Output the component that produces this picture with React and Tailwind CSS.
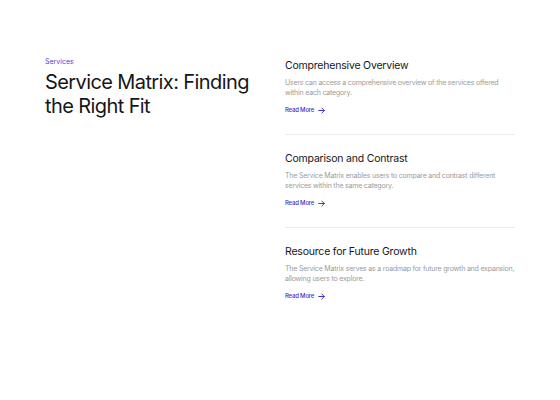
import React from "react";

const items = [
  {
    title: "Comprehensive Overview",
    desc: "Users can access a comprehensive overview of the services offered within each category.",
  },
  {
    title: "Comparison and Contrast",
    desc: "The Service Matrix enables users to compare and contrast different services within the same category.",
  },
  {
    title: "Resource for Future Growth",
    desc: "The Service Matrix serves as a roadmap for future growth and expansion, allowing users to explore.",
  },
];

function Arrow() {
  return (
    <svg width="7" height="7" viewBox="0 0 10 10" fill="none" stroke="currentColor" strokeWidth="1.4" strokeLinecap="round" strokeLinejoin="round">
      <path d="M1 5h8M5.5 1.5 9 5 5.5 8.5" />
    </svg>
  );
}

export default function App() {
  return (
    <div className="w-[560px] h-[400px] bg-white pl-[45px] pt-[57px] flex font-['Inter',sans-serif] text-[#1b1b1f]">
      <div className="w-[240px] pr-[25px] flex flex-col">
        <div className="text-[7px] leading-[10px] text-[#4a44d6]">Services</div>
        <h1 className="mt-[3px] text-[20px] leading-[24px] font-normal tracking-[-0.6px] text-[#161618]">
          Service Matrix: Finding the Right Fit
        </h1>
      </div>
      <div className="w-[230px] pt-[2px] flex flex-col">
        {items.map((it, i) => (
          <div key={i} className={`flex flex-col ${i < items.length - 1 ? "pb-[19px] border-b border-[#ebebeb] mb-[17px]" : ""}`}>
            <h2 className="text-[10.5px] leading-[14px] font-normal tracking-[-0.2px] text-[#161618]">{it.title}</h2>
            <p className="mt-[5px] text-[7px] leading-[10px] tracking-[-0.2px] text-[#9b9b9b]">{it.desc}</p>
            <a className="mt-[7px] flex items-center gap-[4px] text-[6px] leading-[10px] font-medium tracking-[-0.2px] text-[#3b30c9]">
              Read More <Arrow />
            </a>
          </div>
        ))}
      </div>
    </div>
  );
}
